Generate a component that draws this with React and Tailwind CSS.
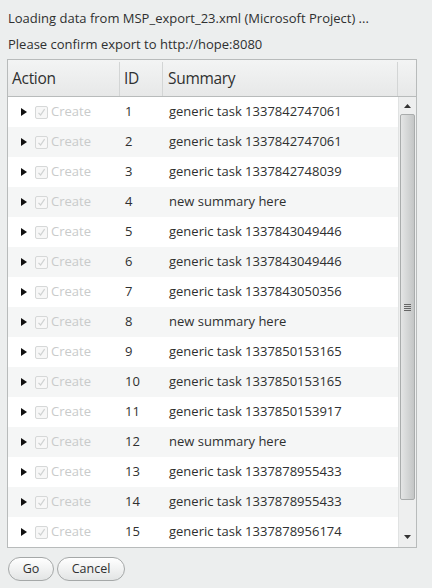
import React from "react";

const rows = [
  [1, "generic task 1337842747061"],
  [2, "generic task 1337842747061"],
  [3, "generic task 1337842748039"],
  [4, "new summary here"],
  [5, "generic task 1337843049446"],
  [6, "generic task 1337843049446"],
  [7, "generic task 1337843050356"],
  [8, "new summary here"],
  [9, "generic task 1337850153165"],
  [10, "generic task 1337850153165"],
  [11, "generic task 1337850153917"],
  [12, "new summary here"],
  [13, "generic task 1337878955433"],
  [14, "generic task 1337878955433"],
  [15, "generic task 1337878956174"],
];

function Check() {
  return (
    <span className="w-[13px] h-[13px] border border-[#d6d8d8] bg-[#f7f7f7] rounded-[2px] flex items-center justify-center">
      <svg width="9" height="9" viewBox="0 0 9 9">
        <path d="M1.5 4.8 L3.6 7 L7.6 1.2" fill="none" stroke="#cfd2d2" strokeWidth="1.2" />
      </svg>
    </span>
  );
}

export default function App() {
  return (
    <div
      className="w-[432px] h-[588px] bg-[#eceeee] px-[7px] text-[#2f3030] overflow-hidden"
      style={{ fontFamily: "'Open Sans', 'Liberation Sans', sans-serif" }}
    >
      <div className="pt-[8px] text-[13px] leading-[20px] pl-px">
        Loading data from MSP_export_23.xml (Microsoft Project) ...
      </div>
      <div className="pt-[6px] text-[13px] leading-[20px] pl-px">
        Please confirm export to http://hope:8080
      </div>
      <div className="mt-[5px] w-[410px] h-[489px] border border-[#b8bbbb] flex flex-col bg-white">
        <div className="h-[37px] flex border-b border-[#b8bbbb] bg-gradient-to-b from-[#f3f4f4] to-[#e7e8e8] text-[15.5px] tracking-[-0.3px] pt-[2px]">
          <div className="w-[112px] border-r border-[#d3d5d5] flex items-center pl-[4px]">Action</div>
          <div className="w-[43px] border-r border-[#d3d5d5] flex items-center pl-[4px]">ID</div>
          <div className="w-[235px] border-r border-[#d3d5d5] flex items-center pl-[5px]">Summary</div>
          <div className="flex-1" />
        </div>
        <div className="flex-1 flex min-h-0">
          <div className="w-[390px] flex flex-col">
            {rows.map(([id, s], i) => (
              <div
                key={i}
                className={`h-[30px] flex items-center text-[13px] ${i % 2 === 1 ? "bg-[#f5f6f6]" : "bg-white"}`}
              >
                <div className="w-[112px] flex items-center pl-[13px]">
                  <svg width="6" height="8" viewBox="0 0 6 8" className="mr-[8px]">
                    <path d="M0 0 L6 4 L0 8 Z" fill="#111" />
                  </svg>
                  <Check />
                  <span className="ml-[3px] text-[#c9cbcb] text-[13px]">Create</span>
                </div>
                <div className="w-[44px] pl-[5px]">{id}</div>
                <div className="flex-1 pl-[5px]">{s}</div>
              </div>
            ))}
          </div>
          <div className="flex-1 bg-[#eeefef] border-l border-[#e0e2e2] flex flex-col items-center">
            <div className="h-[17px] flex items-center justify-center">
              <svg width="7" height="4" viewBox="0 0 7 4"><path d="M0 4 L3.5 0 L7 4 Z" fill="#333" /></svg>
            </div>
            <div className="w-[15px] h-[386px] rounded-[2px] border border-[#a9acac] bg-gradient-to-r from-[#e4e5e5] via-[#d4d6d6] to-[#c4c6c6] flex items-center justify-center">
              <div className="flex flex-col gap-[1px]">
                <div className="w-[7px] h-px bg-[#666]" />
                <div className="w-[7px] h-px bg-[#666]" />
                <div className="w-[7px] h-px bg-[#666]" />
                <div className="w-[7px] h-px bg-[#666]" />
              </div>
            </div>
            <div className="flex-1 flex items-end justify-center pb-[8px]">
              <svg width="7" height="4" viewBox="0 0 7 4"><path d="M0 0 L3.5 4 L7 0 Z" fill="#333" /></svg>
            </div>
          </div>
        </div>
      </div>
      <div className="mt-[9px] flex gap-[3px] pl-px">
        <button className="h-[24px] w-[46px] rounded-full border border-[#a5a8a8] bg-gradient-to-b from-white to-[#e3e5e5] text-[12.5px] text-[#2f3030]">Go</button>
        <button className="h-[24px] w-[68px] rounded-full border border-[#a5a8a8] bg-gradient-to-b from-white to-[#e3e5e5] text-[12.5px] text-[#2f3030]">Cancel</button>
      </div>
    </div>
  );
}
